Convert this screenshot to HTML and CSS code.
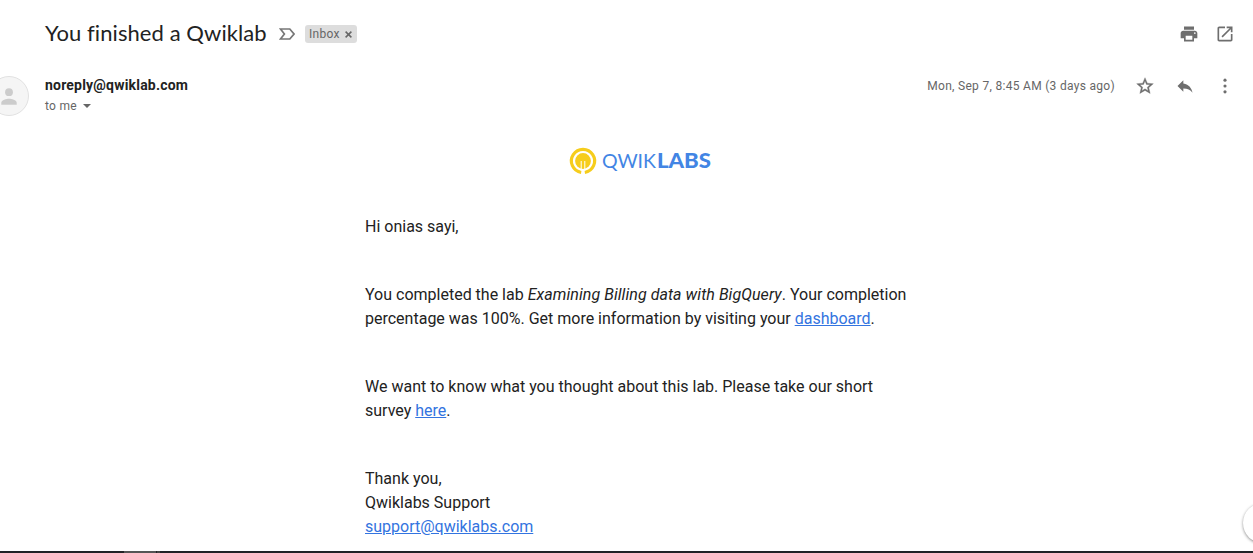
FILE: index.html
```html
<!DOCTYPE html>
<html lang="en">
<head>
<meta charset="utf-8">
<title>You finished a Qwiklab</title>
<link rel="stylesheet" href="styles.css">
</head>
<body>
<div class="page">
  <header class="subject">
    <h1 class="subject-title">You finished a Qwiklab</h1>
    <svg class="important" width="16" height="12" viewBox="0 0 16 12"><path d="M1.5 1H10.8L15 6L10.8 11H1.5L5.4 6Z" fill="none" stroke="#777" stroke-width="1.7"/></svg>
    <span class="label">Inbox<svg class="label-close" width="7" height="7" viewBox="0 0 7 7"><path d="M.6.6L6.4 6.4M6.4.6L.6 6.4" stroke="#666" stroke-width="1.5"/></svg></span>
    <div class="subject-actions">
      <svg width="20" height="20" viewBox="0 0 24 24"><path fill="#6e6e6e" d="M19 8H5c-1.66 0-3 1.34-3 3v6h4v4h12v-4h4v-6c0-1.66-1.34-3-3-3zm-3 11H8v-5h8v5zm3-7c-.55 0-1-.45-1-1s.45-1 1-1 1 .45 1 1-.45 1-1 1zm-1-9H6v4h12V3z"/></svg>
      <svg width="20" height="20" viewBox="0 0 24 24"><path fill="#6e6e6e" d="M19 19H5V5h7V3H5c-1.11 0-2 .9-2 2v14c0 1.1.89 2 2 2h14c1.1 0 2-.9 2-2v-7h-2v7zM14 3v2h3.59l-9.83 9.83 1.41 1.41L19 6.41V10h2V3h-7z"/></svg>
    </div>
  </header>

  <section class="sender">
    <svg class="avatar" width="40" height="40" viewBox="0 0 40 40"><circle cx="20" cy="20" r="19.5" fill="#f5f5f5" stroke="#e1e1e1"/><circle cx="20" cy="16.2" r="3.9" fill="#ccc"/><path d="M12.3 28.7v-1.9c0-2.7 5.2-4 7.7-4s7.7 1.3 7.7 4v1.9z" fill="#ccc"/></svg>
    <div class="from">
      <div class="from-name">noreply@qwiklab.com</div>
      <div class="from-to">to me<svg class="caret" width="8" height="4" viewBox="0 0 8 4"><path d="M0 0H8L4 4Z" fill="#666"/></svg></div>
    </div>
    <div class="sender-actions">
      <span class="date">Mon, Sep 7, 8:45 AM (3 days ago)</span>
      <svg width="20" height="20" viewBox="0 0 24 24"><path fill="#6e6e6e" stroke="#6e6e6e" stroke-width=".4" d="M22 9.24l-7.19-.62L12 2 9.19 8.63 2 9.24l5.46 4.73L5.82 21 12 17.27 18.18 21l-1.63-7.03L22 9.24zM12 15.4l-3.76 2.27 1-4.28-3.32-2.88 4.38-.38L12 6.1l1.71 4.04 4.38.38-3.32 2.88 1 4.28L12 15.4z"/></svg>
      <svg width="20" height="20" viewBox="0 0 24 24"><path fill="#6e6e6e" d="M10 9V5l-7 7 7 7v-4.1c5 0 8.5 1.6 11 5.1-1-5-4-10-11-11z"/></svg>
      <svg width="20" height="20" viewBox="0 0 24 24"><g fill="#6e6e6e"><circle cx="12" cy="5" r="1.9"/><circle cx="12" cy="12" r="1.9"/><circle cx="12" cy="19" r="1.9"/></g></svg>
    </div>
  </section>

  <main class="message">
    <svg class="logo" width="144" height="30" viewBox="0 0 144 30">
      <path d="M13.2 26.4A11.6 11.6 0 1 1 16.8 26.4" fill="none" stroke="#f6cd1c" stroke-width="3.2"/>
      <circle cx="15" cy="15" r="7.9" fill="#f6cd1c"/>
      <path d="M13.2 15V25M16.8 15V25" stroke="#fff" stroke-width="1"/>
      <text class="logo-light" x="34" y="22" textLength="54" lengthAdjust="spacingAndGlyphs">QWIK</text>
      <text class="logo-bold" x="89" y="22" textLength="54" lengthAdjust="spacingAndGlyphs">LABS</text>
    </svg>
    <p>Hi onias sayi,</p>
    <p>You completed the lab <em>Examining Billing data with BigQuery</em>. Your completion<br>percentage was 100%. Get more information by visiting your <a href="#">dashboard</a>.</p>
    <p>We want to know what you thought about this lab. Please take our short<br>survey <a href="#">here</a>.</p>
    <p>Thank you,<br>Qwiklabs Support<br><a href="#">support@qwiklabs.com</a></p>
  </main>
  <div class="panel-toggle"></div>
  <div class="taskbar"><span class="task-active"></span><span class="task-edge"></span></div>
</div>
</body>
</html>
```
FILE: styles.css
```css
* { box-sizing: border-box; }
body { margin: 0; background: #fff; color: #222; font-family: Roboto, "Liberation Sans", sans-serif; }
svg { display: block; flex: none; }
.page { position: relative; width: 1253px; height: 553px; overflow: hidden; display: flex; flex-direction: column; }
.subject, .sender, .message { flex: none; }
.subject { display: flex; align-items: center; height: 68px; padding: 0 18px 0 45px; }
.subject-title { margin: 0; padding-bottom: 2px; width: 234px; font: 400 22px/28px Lato, sans-serif; letter-spacing: .08px; white-space: nowrap; }
.label { display: flex; align-items: center; gap: 5px; margin-left: 10px; width: 52px; height: 18px; padding-left: 4px; border-radius: 3px; background: #ddd; color: #666; font-size: 12px; letter-spacing: .3px; }
.subject-actions { display: flex; gap: 16px; margin-left: auto; }
.sender { display: flex; height: 49px; padding: 1px 18px 0 0; }
.avatar { margin: 7px 16px 0 -11px; }
.from { padding-top: 7px; }
.from-name { font-size: 14px; line-height: 18px; font-weight: 700; letter-spacing: .2px; }
.from-to { display: flex; align-items: center; gap: 6px; height: 24px; color: #666; font-size: 12px; letter-spacing: .3px; }
.sender-actions { display: flex; align-items: center; gap: 20px; height: 20px; margin: 7px 0 0 auto; }
.date { color: #666; font-size: 12px; letter-spacing: .3px; white-space: nowrap; }
.message { width: 550px; margin: 29px 0 0 365px; font-size: 16px; line-height: 24px; }
.message p { margin: 0 0 44px; white-space: nowrap; }
.message em { letter-spacing: .06px; }
.message a { color: #3374e0; }
.message .logo { margin: 0 0 39px 203px; }
.logo-light, .logo-bold { font-family: Lato, sans-serif; font-size: 20px; fill: #4285e4; }
.logo-light { font-weight: 400; }
.logo-bold { font-weight: 900; }
.panel-toggle { position: absolute; left: 1243px; top: 503px; width: 40px; height: 40px; border-radius: 50%; background: #fff; box-shadow: 0 1px 3px rgba(0,0,0,.45); }
.taskbar { position: absolute; left: 0; right: 0; bottom: 0; height: 2px; display: flex; gap: 1px; padding-left: 124px; background: #222326; }
.task-active { width: 32px; background: #555; }
.task-edge { width: 3px; background: #444; }
```
